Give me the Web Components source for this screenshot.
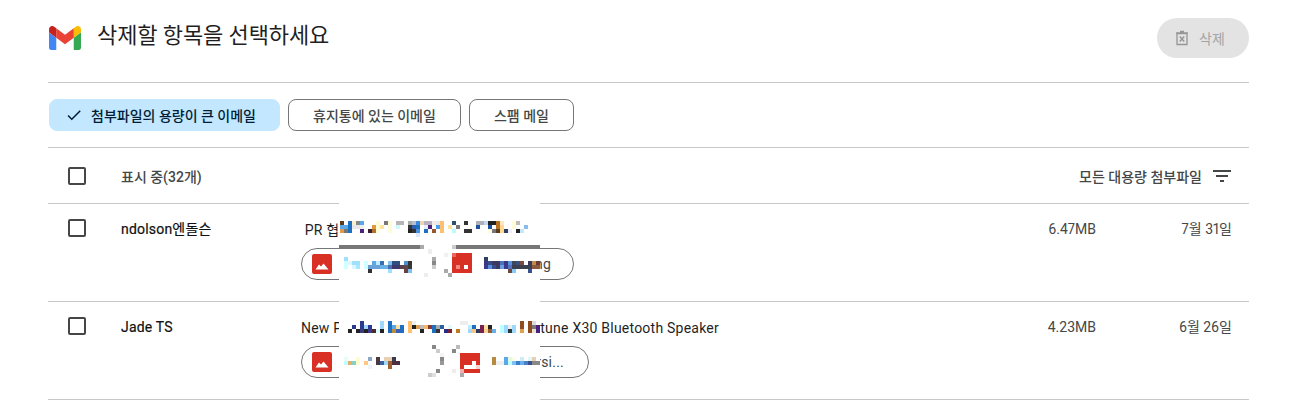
<!DOCTYPE html>
<html lang="ko">
<head>
<meta charset="utf-8">
<title>삭제할 항목을 선택하세요</title>
<style>
  html, body {
    margin: 0;
    height: 405px;
    overflow: hidden;
    background: #fff;
    font-family: Roboto, "Noto Sans CJK KR", sans-serif;
    color: #1f1f1f;
  }
</style>
</head>
<body>
<cleanup-page>
  <page-header title="삭제할 항목을 선택하세요"></page-header>
  <filter-bar>
    <filter-chip active>첨부파일의 용량이 큰 이메일</filter-chip>
    <filter-chip>휴지통에 있는 이메일</filter-chip>
    <filter-chip>스팸 메일</filter-chip>
  </filter-bar>
  <list-header count="표시 중(32개)" sort="모든 대용량 첨부파일"></list-header>
  <mail-row sender="ndolson엔돌슨" size="6.47MB" date="7월 31일">
    <span slot="start">&nbsp;PR 협</span>
    <attachment-chip width="273" tail="22">ng</attachment-chip>
  </mail-row>
  <mail-row sender="Jade TS" size="4.23MB" date="6월 26일">
    <span slot="start">New P</span>
    <span slot="end">tune X30 Bluetooth Speaker</span>
    <attachment-chip width="288" tail="24">rsi...</attachment-chip>
  </mail-row>
  <redaction-mosaic></redaction-mosaic>
</cleanup-page>

<script>
class CleanupPage extends HTMLElement {
  constructor() {
    super();
    this.attachShadow({ mode: 'open' });
    this.shadowRoot.innerHTML = `
      <style>
        :host {
          display: block;
          position: relative;
          box-sizing: border-box;
          width: 1303px;
          height: 405px;
          padding: 0 54px 0 48px;
        }
      </style>
      <slot></slot>
    `;
  }
}

class PageHeader extends HTMLElement {
  constructor() {
    super();
    this.attachShadow({ mode: 'open' });
    this.shadowRoot.innerHTML = `
      <style>
        :host {
          display: flex;
          align-items: flex-start;
          box-sizing: border-box;
          height: 83px;
          border-bottom: 1px solid #c7c7c7;
        }
        .logo {
          width: 32px;
          height: 24px;
          margin: 26px 16px 0 1px;
          flex: none;
        }
        h1 {
          margin: 20px 0 0;
          font-size: 22px;
          font-weight: 400;
          line-height: 32px;
          letter-spacing: -0.1px;
          color: #1f1f1f;
          flex: 1;
        }
        .delete {
          display: flex;
          align-items: center;
          box-sizing: border-box;
          width: 92px;
          height: 40px;
          margin-top: 18px;
          padding-left: 18px;
          gap: 10px;
          border-radius: 20px;
          background: #e3e3e3;
          color: #a3a3a3;
          font-size: 14px;
        }
        .delete svg { width: 14px; height: 16px; fill: none; stroke: #969696; }
      </style>
      <svg class="logo" viewBox="52 42 88 66">
        <path fill="#4285f4" d="M58 108h14V74L52 59v43c0 3.32 2.69 6 6 6"/>
        <path fill="#34a853" d="M120 108h14c3.32 0 6-2.69 6-6V59l-20 15"/>
        <path fill="#fbbc04" d="M120 48v26l20-15v-8c0-7.42-8.47-11.65-14.4-7.2"/>
        <path fill="#ea4335" d="M72 74V48l24 18 24-18v26L96 92"/>
        <path fill="#c5221f" d="M52 51v8l20 15V48l-5.6-4.2c-5.94-4.45-14.4-.22-14.4 7.2"/>
      </svg>
      <h1></h1>
      <div class="delete">
        <svg viewBox="0 0 14 16">
          <path d="M2 3.500h10v11H2zM1 3h12M5 1.500h4" stroke-width="1.300"/>
          <path d="M4.800 6.500l4.400 5M9.200 6.500l-4.400 5" stroke-width="1.500"/>
        </svg>
        <span>삭제</span>
      </div>
    `;
  }

  connectedCallback() {
    this.shadowRoot.querySelector('h1').textContent = this.getAttribute('title');
  }
}

class FilterBar extends HTMLElement {
  constructor() {
    super();
    this.attachShadow({ mode: 'open' });
    this.shadowRoot.innerHTML = `
      <style>
        :host {
          display: flex;
          gap: 8px;
          box-sizing: border-box;
          height: 65px;
          padding: 16px 0 0 1px;
          border-bottom: 1px solid #c7c7c7;
        }
      </style>
      <slot></slot>
    `;
  }
}

class FilterChip extends HTMLElement {
  constructor() {
    super();
    this.attachShadow({ mode: 'open' });
    this.shadowRoot.innerHTML = `
      <style>
        :host {
          display: inline-flex;
          align-items: center;
          box-sizing: border-box;
          height: 32px;
          padding: 0 24px;
          border: 1px solid #747775;
          border-radius: 8px;
          font-size: 14px;
          font-weight: 500;
          color: #444746;
        }
        :host([active]) {
          padding: 0 23px 0 15px;
          gap: 8px;
          border-color: #c2e7ff;
          background: #c2e7ff;
          color: #001d35;
        }
        svg { display: none; width: 18px; height: 18px; fill: #001d35; }
        :host([active]) svg { display: block; }
      </style>
      <svg viewBox="0 0 24 24"><path d="M9 16.170L4.830 12l-1.420 1.410L9 19 21 7l-1.410-1.410z"/></svg>
      <slot></slot>
    `;
  }
}

class ListHeader extends HTMLElement {
  constructor() {
    super();
    this.attachShadow({ mode: 'open' });
    this.shadowRoot.innerHTML = `
      <style>
        :host {
          display: flex;
          align-items: center;
          box-sizing: border-box;
          height: 56px;
          padding: 0 15px 0 20px;
          border-bottom: 1px solid #c7c7c7;
          font-size: 14px;
          font-weight: 500;
          color: #444746;
        }
        .box {
          box-sizing: border-box;
          width: 18px;
          height: 18px;
          margin-right: 35px;
          border: 2px solid #444746;
          border-radius: 2px;
        }
        .count { flex: 1; }
        svg { width: 24px; height: 24px; margin-left: 8px; fill: #444746; }
      </style>
      <div class="box"></div>
      <span class="count"></span>
      <span class="sort"></span>
      <svg viewBox="0 0 24 24"><path d="M10 18h4v-2h-4v2zM3 6v2h18V6H3zm3 7h12v-2H6v2z"/></svg>
    `;
  }

  connectedCallback() {
    this.shadowRoot.querySelector('.count').textContent = this.getAttribute('count');
    this.shadowRoot.querySelector('.sort').textContent = this.getAttribute('sort');
  }
}

class MailRow extends HTMLElement {
  constructor() {
    super();
    this.attachShadow({ mode: 'open' });
    this.shadowRoot.innerHTML = `
      <style>
        :host {
          display: grid;
          grid-template-columns: 73px 180px 1fr 120px 136px;
          box-sizing: border-box;
          height: 98px;
          padding: 15px 17px 0 0;
          border-bottom: 1px solid #c7c7c7;
          font-size: 14px;
          line-height: 20px;
        }
        .box {
          box-sizing: border-box;
          width: 18px;
          height: 18px;
          margin-left: 20px;
          border: 2px solid #444746;
          border-radius: 2px;
        }
        .sender { letter-spacing: 0.2px; color: #111; -webkit-text-stroke: 0.2px #111; }
        .subject {
          display: flex;
          justify-content: space-between;
          width: 418px;
          padding-top: 1px;
          letter-spacing: 0.23px;
          color: #1f1f1f;
        }
        .chips { margin-top: 8px; letter-spacing: 0.23px; }
        .size, .date { text-align: right; color: #444746; font-variant-numeric: proportional-nums; }
      </style>
      <div class="box"></div>
      <div class="sender"></div>
      <div class="main">
        <div class="subject"><slot name="start"></slot><slot name="end"></slot></div>
        <div class="chips"><slot></slot></div>
      </div>
      <div class="size"></div>
      <div class="date"></div>
    `;
  }

  connectedCallback() {
    for (const key of ['sender', 'size', 'date']) {
      this.shadowRoot.querySelector('.' + key).textContent = this.getAttribute(key);
    }
  }
}

class AttachmentChip extends HTMLElement {
  constructor() {
    super();
    this.attachShadow({ mode: 'open' });
    this.shadowRoot.innerHTML = `
      <style>
        :host {
          display: flex;
          align-items: center;
          justify-content: space-between;
          box-sizing: border-box;
          height: 32px;
          padding-left: 10px;
          border: 1px solid #747775;
          border-radius: 16px;
          font-size: 14px;
          color: #444746;
        }
        svg { width: 20px; height: 20px; }
      </style>
      <svg viewBox="0 0 20 20">
        <rect width="20" height="20" rx="2" fill="#d93025"/>
        <path fill="#fff" d="M3.500 15.500L7 10.500l2 2 2.500-3 5 6z"/>
      </svg>
      <span><slot></slot></span>
    `;
  }

  connectedCallback() {
    this.style.width = this.getAttribute('width') + 'px';
    this.style.paddingRight = this.getAttribute('tail') + 'px';
  }
}

// pixelated cover over the private part of the list, cells are 4px
const MOSAIC = [
  [221, '340 #5a3a20,348 #1f6fc0,352 #fdeecb,356 #888,360 #5aa8e8,376 #fefbd8,384 #777,388 #fefbd8,396 #b5b5b5,400 #b5b5b5,408 #aaa,412 #b8c0d0,416 #3a8be0,420 #eed5b8,424 #b9b2c0,428 #b9b2c0,432 #f0ece8,436 #e8e8e8,440 #ffbf70,452 #2f4f6f,464 #333,476 #b0b0b8,480 #b0b0b8,484 #c5d8f0,488 #222,492 #222,496 #b87020,500 #fde8c0,512 #fefbd8,516 #bbb'],
  [225, '340 #5aa8e8,344 #5aa8e8,348 #1f6fc0,352 #e8e8ea,356 #e8e8ea,360 #eee,372 #e09a3c,376 #fefbd8,380 #fce49a,388 #fefbd8,396 #cffafa,408 #333,412 #2c5fb0,416 #1f6fc0,424 #e8eef6,428 #4a2080,436 #4aa0f0,440 #ffbf70,448 #fde49c,456 #777,476 #1f4f9f,488 #1f4f9f,496 #b87020,500 #ffd890,512 #fefbd8,524 #8abcf0'],
  [229, '340 #e09a4c,344 #777,348 #1f6fc0,360 #4a2080,368 #3a2030,372 #b5702c,376 #fefbd8,388 #fefbd8,408 #222,412 #333,416 #4a90e0,424 #1f6fc0,432 #9a5530,440 #ffbf70,452 #bffafa,464 #333,468 #333,488 #fdfbe0,492 #777,496 #5a3a20,500 #ffd890,504 #2f3f5f,508 #eef,516 #222,520 #bfeaff'],
  [233, '416 #dde8fa'],
  [249, '428 #eee'],
  [250, '428 #eee'],
  [253, '444 #f0f0f0'],
  [257, '344 #9fe0ff,432 #aaa,484 #2f3f5f'],
  [261, '344 #cfffff,348 #dff5ff,352 #9fe0ff,356 #9fe0ff,364 #cfffff,372 #5aa8e8,376 #bfeaff,380 #3a70b0,388 #7fc0ef,392 #2f4f80,396 #2f4f80,404 #4a90d0,408 #333,432 #888,484 #3a3a80,488 #3a4a90,492 #3a3a60,496 #3a3a60,500 #5070c0,504 #3a3a80,508 #5a90e0,512 #3a4a5a,516 #3a5080,520 #7a4a40,528 #3a3a5a,532 #c08a50,536 #6a3a30'],
  [265, '344 #cfffff,352 #dff5ff,356 #a8e8ff,364 #cfffff,368 #6aa0d8,372 #6aa0d8,376 #6aa0d8,380 #6ab0e8,384 #6ab0e8,388 #4a70a8,392 #3a3a70,396 #3a3a70,400 #5a4050,404 #5a4a50,408 #3a3a3a,432 #ccc,484 #3a3a90,488 #5a90d8,492 #3a4a90,496 #3a3a60,500 #6aa0e0,504 #3a3a90,508 #5a70c0,512 #3a4050,516 #3a4050,520 #3a4050,524 #3a4050,528 #3a4050,532 #8a5a40,536 #8a5a40'],
  [269, '368 #333,388 #9fe0ff,404 #6a4040,408 #7fc0ef,444 #aaa,508 #6a4a40,512 #8acaf8,528 #3a5090'],
  [273, '424 #eee,448 #aaa'],
  [321, '360 #2a3a90,380 #9fd8ff,388 #1f6fc0,408 #ffc070,412 #eee,460 #eee,464 #eee,520 #8f4a20,528 #8f4a20,532 #ddd'],
  [325, '352 #2a3a90,360 #2a3a90,364 #9fd8ff,368 #2a3a90,380 #9fd8ff,388 #1f6fc0,392 #5aa8e8,396 #fce0a0,400 #1f6fc0,408 #ffc070,412 #222,416 #e0a050,420 #bbb,424 #f0b870,428 #8a3a30,432 #1f6fc0,436 #aaa,440 #2a5fa0,448 #dffcfc,468 #bfeaff,472 #1f6fc0,480 #7a2050,484 #fde0a0,488 #222,500 #bfffff,504 #9fd8ff,508 #eee,512 #9fd8ff,520 #8f4a20,528 #8f4a20,532 #777,536 #4a2080'],
  [329, '348 #222,356 #222,360 #3a3a80,364 #222,368 #3a3a90,372 #4a2a2a,376 #dff,380 #222,388 #1f6fc0,392 #c08a40,396 #3a60b0,400 #1f6fc0,408 #ffc070,420 #222,432 #1f6fc0,436 #333,444 #2a2a80,448 #7a2030,456 #c07a20,468 #9fd8ff,472 #f8c880,476 #2a3a60,480 #7a2050,484 #f8d090,488 #9a5a30,492 #6ab0e8,500 #bfffff,504 #9fd8ff,508 #2a3a3a,512 #9fd8ff,520 #e0a050,528 #8f4a20,532 #e8e4d0,536 #4a2080'],
  [345, '432 #888,456 #bbb'],
  [349, '436 #ccc,452 #888'],
  [353, '440 #f4f4f4'],
  [357, '344 #e8fcfc,356 #fffdd0,368 #8aa8c8,376 #4a3a40,384 #e8d0b0,388 #e8d0b0,392 #3a3a50,440 #888,492 #b88a40,504 #5aa8e8,508 #e8f8e0,512 #fcfce8,520 #cfeaf8,528 #e0f8fa,532 #e8d0b0'],
  [361, '344 #bfffff,348 #e0b070,352 #88d0c0,356 #fffdd0,364 #ffc880,376 #4a3a40,380 #3a60a0,384 #9fd8ff,388 #a06030,392 #4a3040,396 #4a3040,440 #999,492 #b88a40,496 #eee,500 #eee,504 #5aa8e8,508 #bfffff,512 #7fc0ef,516 #3a80d0,520 #6ab0e8,524 #4a80c8,528 #3a5090,532 #888,536 #888'],
  [365, '368 #eef4fa,388 #a06030'],
  [369, '436 #888,452 #eee'],
  [373, '428 #ccc,432 #e0e0e0,460 #aaa']
];

class RedactionMosaic extends HTMLElement {
  constructor() {
    super();
    this.attachShadow({ mode: 'open' });
    let cells = '';
    for (const [y, list] of MOSAIC) {
      for (const item of list.split(',')) {
        const [x, fill] = item.split(' ');
        cells += `<rect x="${x}" y="${y}" width="4" height="4" fill="${fill}"/>`;
      }
    }
    this.shadowRoot.innerHTML = `
      <style>
        :host {
          display: block;
          position: absolute;
          left: 339px;
          top: 190px;
          width: 201px;
          height: 215px;
          background: #fff;
        }
        svg { display: block; shape-rendering: crispEdges; }
      </style>
      <svg width="201" height="215" viewBox="339 190 201 215">
        ${cells}
        <rect x="339" y="245" width="81" height="4" fill="#777"/>
        <rect x="420" y="245" width="4" height="4" fill="#aaa"/>
        <rect x="452" y="245" width="4" height="4" fill="#ccc"/>
        <rect x="456" y="245" width="84" height="4" fill="#777"/>
        <rect x="452" y="253" width="20" height="20" fill="#d93025"/>
        <rect x="452" y="253" width="4" height="4" fill="#e8685c"/>
        <rect x="456" y="265" width="4" height="4" fill="#f08a80"/>
        <rect x="464" y="265" width="4" height="4" fill="#fff"/>
        <rect x="460" y="353" width="20" height="20" fill="#d93025"/>
        <rect x="472" y="361" width="4" height="4" fill="#fff"/>
        <rect x="464" y="365" width="12" height="4" fill="#fff"/>
        <rect x="476" y="365" width="4" height="4" fill="#f8d0d0"/>
        <rect x="460" y="369" width="4" height="4" fill="#f0b0b0"/>
      </svg>
    `;
  }
}

customElements.define('cleanup-page', CleanupPage);
customElements.define('page-header', PageHeader);
customElements.define('filter-bar', FilterBar);
customElements.define('filter-chip', FilterChip);
customElements.define('list-header', ListHeader);
customElements.define('mail-row', MailRow);
customElements.define('attachment-chip', AttachmentChip);
customElements.define('redaction-mosaic', RedactionMosaic);
</script>
</body>
</html>
